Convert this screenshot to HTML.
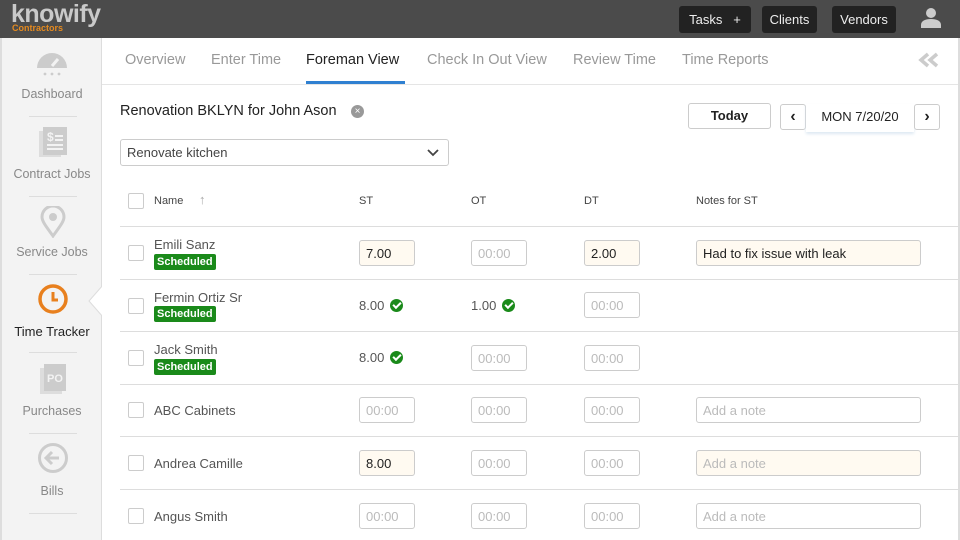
<!DOCTYPE html>
<html><head><style>
*{box-sizing:border-box;margin:0;padding:0}
body{width:960px;height:540px;overflow:hidden;font-family:"Liberation Sans",sans-serif;background:#fff;position:relative;color:#333}
.top{position:absolute;left:0;top:0;width:960px;height:38px;background:#4b4b4b}
.logo{position:absolute;left:11px;top:0px;color:#c9c9c9;font-size:25px;font-weight:bold;letter-spacing:-0.5px}
.logo small{position:absolute;left:1px;top:23px;font-size:9px;color:#e58a1f;font-weight:bold;letter-spacing:0}
.tb{position:absolute;top:6px;height:27px;background:#222;color:#eee;font-size:13px;border-radius:3px;line-height:27px;text-align:center}
.side{position:absolute;left:0;top:38px;width:102px;height:502px;background:#f3f3f3;border-right:1px solid #ddd;border-left:2px solid #ddd}
.si{position:absolute;left:0;width:100px;text-align:center;font-size:12.5px;color:#888}
.sep{position:absolute;left:27px;width:48px;height:1px;background:#ddd}
.tabs{position:absolute;left:102px;top:38px;width:856px;height:47px;border-bottom:1px solid #e5e5e5}
.tab{position:absolute;top:14px;font-size:14.5px;color:#999}
.abs{position:absolute}
.cb{position:absolute;left:128px;width:16px;height:16px;border:1px solid #ccc;border-radius:2px;background:#fff}
.hd{position:absolute;top:195px;font-size:11px;color:#444}
.line{position:absolute;left:120px;width:848px;height:1px;background:#ddd}
.nm{position:absolute;left:154px;font-size:13px;color:#555}
.sch{position:absolute;left:154px;background:#1a8a1a;color:#fff;font-size:11px;font-weight:bold;padding:1px 3px;border-radius:2px;line-height:14px}
.in{position:absolute;width:56px;height:26px;border:1px solid #ccc;border-radius:3px;font-size:13px;padding:5px 6px;color:#bbb;background:#fff}
.in.f{background:#fffaf1;color:#222}
.note{position:absolute;left:696px;width:225px;height:26px;border:1px solid #ccc;border-radius:3px;font-size:13px;padding:5px 6px;color:#bbb}
.v{position:absolute;font-size:13px;color:#555}
.ck{display:inline-block;width:13px;height:13px;border-radius:50%;background:#1a8a1a;vertical-align:-2px;margin-left:6px;position:relative}
.ck:after{content:"";position:absolute;left:3px;top:3px;width:6px;height:3px;border-left:2px solid #fff;border-bottom:2px solid #fff;transform:rotate(-45deg)}
.btn{position:absolute;height:26px;border:1px solid #ccc;border-radius:3px;background:#fff;font-size:13px;text-align:center;line-height:24px;color:#222}
</style></head><body>
<div class="top">
<div class="logo">knowify<small>Contractors</small></div>
<div class="tb" style="left:679px;width:72px">Tasks &nbsp;&nbsp;+</div>
<div class="tb" style="left:762px;width:55px">Clients</div>
<div class="tb" style="left:832px;width:64px">Vendors</div>
<svg class="abs" style="left:920px;top:7px" width="22" height="22" viewBox="0 0 22 22"><circle cx="11" cy="6" r="5" fill="#ccc"/><path d="M1 21v-3c0-4 4-6 10-6s10 2 10 6v3z" fill="#ccc"/></svg>
</div>
<div class="side">
<svg class="abs" style="left:34px;top:8px" width="32" height="32" viewBox="0 0 32 32"><path d="M1 22a15 15 0 1 1 30 0z" fill="#ccc"/><path d="M16 20l6-7" stroke="#f3f3f3" stroke-width="3"/><circle cx="9" cy="28" r="1.4" fill="#ccc"/><circle cx="16" cy="28" r="1.4" fill="#ccc"/><circle cx="23" cy="28" r="1.4" fill="#ccc"/></svg>
<div class="si" style="top:49px">Dashboard</div>
<div class="sep" style="top:78px"></div>
<svg class="abs" style="left:36px;top:88px" width="30" height="32" viewBox="0 0 30 32"><rect x="1" y="5" width="22" height="26" fill="#ddd"/><rect x="5" y="1" width="24" height="28" fill="#ccc"/><text x="9" y="15" font-size="12" fill="#f3f3f3" font-family="Liberation Sans" font-weight="bold">$</text><path d="M17 10h8M17 14h8M9 19h16M9 23h16" stroke="#f3f3f3" stroke-width="2"/></svg>
<div class="si" style="top:129px">Contract Jobs</div>
<div class="sep" style="top:158px"></div>
<svg class="abs" style="left:38px;top:168px" width="26" height="32" viewBox="0 0 26 32"><path d="M13 30C5 19 2 15 2 11a11 11 0 0 1 22 0c0 4-3 8-11 19z" fill="none" stroke="#ccc" stroke-width="3"/><circle cx="13" cy="11" r="4" fill="#ccc"/></svg>
<div class="si" style="top:207px">Service Jobs</div>
<div class="sep" style="top:236px"></div>
<svg class="abs" style="left:35px;top:245px" width="32" height="32" viewBox="0 0 32 32"><circle cx="16" cy="16" r="13" fill="none" stroke="#e8801e" stroke-width="3.5"/><path d="M16 9v8h5" fill="none" stroke="#e8801e" stroke-width="3"/></svg>
<div class="si" style="top:286px;color:#222;font-size:13px">Time Tracker</div>
<div class="sep" style="top:314px"></div>
<svg class="abs" style="left:37px;top:325px" width="30" height="32" viewBox="0 0 30 32"><rect x="1" y="5" width="22" height="26" fill="#ddd"/><rect x="5" y="1" width="22" height="27" fill="#ccc"/><text x="8" y="19" font-size="11" fill="#f3f3f3" font-family="Liberation Sans" font-weight="bold">PO</text></svg>
<div class="si" style="top:366px">Purchases</div>
<div class="sep" style="top:395px"></div>
<svg class="abs" style="left:35px;top:404px" width="32" height="32" viewBox="0 0 32 32"><circle cx="16" cy="16" r="13.5" fill="none" stroke="#ccc" stroke-width="3"/><path d="M22 16H10M15 10l-6 6 6 6" fill="none" stroke="#ccc" stroke-width="3"/></svg>
<div class="si" style="top:446px">Bills</div>
<div class="sep" style="top:475px"></div>
</div>
<svg class="abs" style="left:88px;top:285px" width="16" height="32" viewBox="0 0 16 32"><path d="M15 0L1 16l14 16z" fill="#fff" stroke="#ddd"/><path d="M15 0v32" stroke="#fff" stroke-width="2"/></svg>
<div class="tabs">
<div class="tab" style="left:23px">Overview</div>
<div class="tab" style="left:109px">Enter Time</div>
<div class="tab" style="left:204px;color:#222">Foreman View</div>
<div class="abs" style="left:204px;top:43px;width:99px;height:3px;background:#2f80d1"></div>
<div class="tab" style="left:325px">Check In Out View</div>
<div class="tab" style="left:471px">Review Time</div>
<div class="tab" style="left:580px">Time Reports</div>
<svg class="abs" style="left:816px;top:14px" width="22" height="16" viewBox="0 0 22 16"><path d="M10 2L3 8l7 6M19 2l-7 6 7 6" fill="none" stroke="#ccc" stroke-width="3.5"/></svg>
</div>
<div class="abs" style="left:120px;top:103px;font-size:14.5px;color:#222">Renovation BKLYN for John Ason</div>
<div class="abs" style="left:351px;top:105px;width:13px;height:13px;border-radius:50%;background:#999;color:#fff;font-size:10px;line-height:13px;text-align:center">×</div>
<div class="abs" style="left:120px;top:139px;width:329px;height:27px;border:1px solid #ccc;border-radius:3px;font-size:13px;padding:5px 6px;color:#444">Renovate kitchen</div>
<svg class="abs" style="left:426px;top:148px" width="14" height="10"><path d="M2 2l5 5 5-5" fill="none" stroke="#444" stroke-width="1.8"/></svg>
<div class="btn" style="left:688px;top:103px;width:83px;font-weight:bold">Today</div>
<div class="btn" style="left:780px;top:104px;width:26px;font-weight:bold;font-size:16px">&lsaquo;</div>
<div class="abs" style="left:806px;top:104px;width:108px;height:28px;font-size:13px;text-align:center;line-height:26px;color:#222;box-shadow:0 2px 3px #dde8f2">MON 7/20/20</div>
<div class="btn" style="left:914px;top:104px;width:26px;font-weight:bold;font-size:16px">&rsaquo;</div>

<div class="cb" style="top:193px"></div>
<div class="hd" style="left:154px">Name</div>
<div class="hd" style="left:199px;font-size:13px;top:192px;color:#aaa">↑</div>
<div class="hd" style="left:359px">ST</div>
<div class="hd" style="left:471px">OT</div>
<div class="hd" style="left:584px">DT</div>
<div class="hd" style="left:696px">Notes for ST</div>
<div class="line" style="top:226px"></div>

<div class="cb" style="top:245px"></div><div class="nm" style="top:237px">Emili Sanz</div><div class="sch" style="top:254px">Scheduled</div>
<div class="in f" style="left:359px;top:240px">7.00</div><div class="in" style="left:471px;top:240px">00:00</div><div class="in f" style="left:584px;top:240px">2.00</div>
<div class="note" style="top:240px;background:#fffaf1;color:#222">Had to fix issue with leak</div>
<div class="line" style="top:279px"></div>

<div class="cb" style="top:298px"></div><div class="nm" style="top:290px">Fermin Ortiz Sr</div><div class="sch" style="top:306px">Scheduled</div>
<div class="v" style="left:359px;top:298px">8.00<span class="ck"></span></div><div class="v" style="left:471px;top:298px">1.00<span class="ck"></span></div><div class="in" style="left:584px;top:292px">00:00</div>
<div class="line" style="top:331px"></div>

<div class="cb" style="top:350px"></div><div class="nm" style="top:342px">Jack Smith</div><div class="sch" style="top:359px">Scheduled</div>
<div class="v" style="left:359px;top:350px">8.00<span class="ck"></span></div><div class="in" style="left:471px;top:345px">00:00</div><div class="in" style="left:584px;top:345px">00:00</div>
<div class="line" style="top:384px"></div>

<div class="cb" style="top:402px"></div><div class="nm" style="top:403px">ABC Cabinets</div>
<div class="in" style="left:359px;top:397px">00:00</div><div class="in" style="left:471px;top:397px">00:00</div><div class="in" style="left:584px;top:397px">00:00</div><div class="note" style="top:397px">Add a note</div>
<div class="line" style="top:436px"></div>

<div class="cb" style="top:455px"></div><div class="nm" style="top:456px">Andrea Camille</div>
<div class="in f" style="left:359px;top:450px">8.00</div><div class="in" style="left:471px;top:450px">00:00</div><div class="in" style="left:584px;top:450px">00:00</div><div class="note" style="top:450px;background:#fffaf1">Add a note</div>
<div class="line" style="top:489px"></div>

<div class="cb" style="top:508px"></div><div class="nm" style="top:509px">Angus Smith</div>
<div class="in" style="left:359px;top:503px">00:00</div><div class="in" style="left:471px;top:503px">00:00</div><div class="in" style="left:584px;top:503px">00:00</div><div class="note" style="top:503px">Add a note</div>
<div class="abs" style="left:958px;top:38px;width:2px;height:502px;background:#ddd"></div>
</body></html>
